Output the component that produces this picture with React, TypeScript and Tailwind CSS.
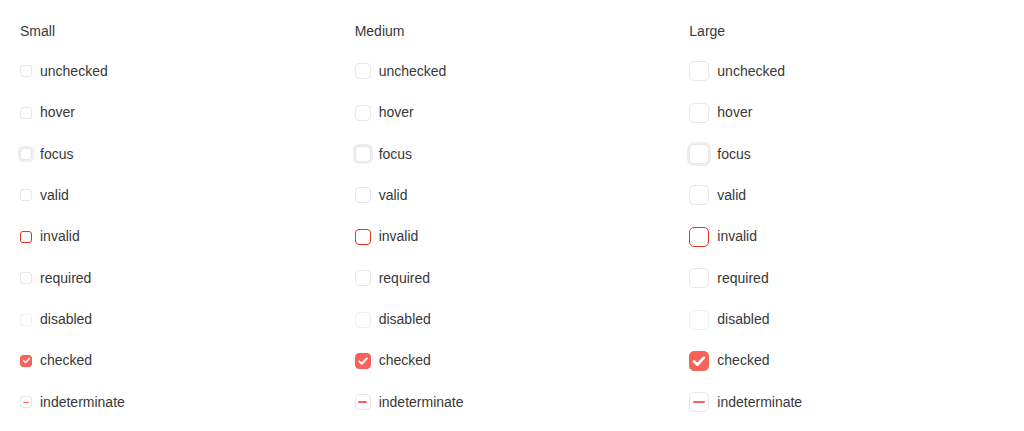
import React from "react";

type Size = "sm" | "md" | "lg";
type State =
  | "unchecked"
  | "hover"
  | "focus"
  | "valid"
  | "invalid"
  | "required"
  | "disabled"
  | "checked"
  | "indeterminate";

const states: State[] = [
  "unchecked",
  "hover",
  "focus",
  "valid",
  "invalid",
  "required",
  "disabled",
  "checked",
  "indeterminate",
];

const boxSize: Record<Size, string> = {
  sm: "w-[12px] h-[12px] rounded-[3px]",
  md: "w-[16px] h-[16px] rounded-[4px]",
  lg: "w-[20px] h-[20px] rounded-[5px]",
};

const dashSize: Record<Size, string> = {
  sm: "w-[6px] h-[1.5px]",
  md: "w-[9px] h-[2px]",
  lg: "w-[12px] h-[2px]",
};

const checkSize: Record<Size, number> = { sm: 9, md: 12, lg: 16 };

function Box({ size, state }: { size: Size; state: State }) {
  let cls = "border border-[#e5e7eb] bg-white";
  if (state === "invalid") cls = "border border-[#e5341f] bg-white";
  if (state === "disabled") cls = "border border-[#f0f1f3] bg-white";
  if (state === "focus")
    cls = "border border-[#e5e7eb] bg-white ring-2 ring-[#eceef1]";
  if (state === "checked") cls = "border border-[#f8625a] bg-[#f8625a]";
  const s = checkSize[size];
  return (
    <span
      className={`${boxSize[size]} ${cls} box-border shrink-0 flex items-center justify-center`}
    >
      {state === "checked" && (
        <svg width={s} height={s} viewBox="0 0 12 12" fill="none">
          <path
            d="M2.3 6.4 L4.8 8.8 L9.7 3.5"
            stroke="white"
            strokeWidth="2"
            strokeLinecap="round"
            strokeLinejoin="round"
          />
        </svg>
      )}
      {state === "indeterminate" && (
        <span className={`${dashSize[size]} bg-[#f8625a] rounded-full`} />
      )}
    </span>
  );
}

function Column({ title, size }: { title: string; size: Size }) {
  return (
    <div className="flex flex-col">
      <div className="h-[41.375px] pt-[3px] flex items-center text-[14px] text-[#383838]">
        {title}
      </div>
      {states.map((st) => (
        <div key={st} className="h-[41.375px] flex items-center gap-2">
          <Box size={size} state={st} />
          <span className="text-[14px] text-[#383838]">{st}</span>
        </div>
      ))}
    </div>
  );
}

export default function App() {
  return (
    <div
      className="w-[1024px] h-[431px] bg-white px-5 pt-[9.3px] grid grid-cols-3 gap-5 content-start"
      style={{ fontFamily: '"Liberation Sans", Arial, sans-serif' }}
    >
      <Column title="Small" size="sm" />
      <Column title="Medium" size="md" />
      <Column title="Large" size="lg" />
    </div>
  );
}
